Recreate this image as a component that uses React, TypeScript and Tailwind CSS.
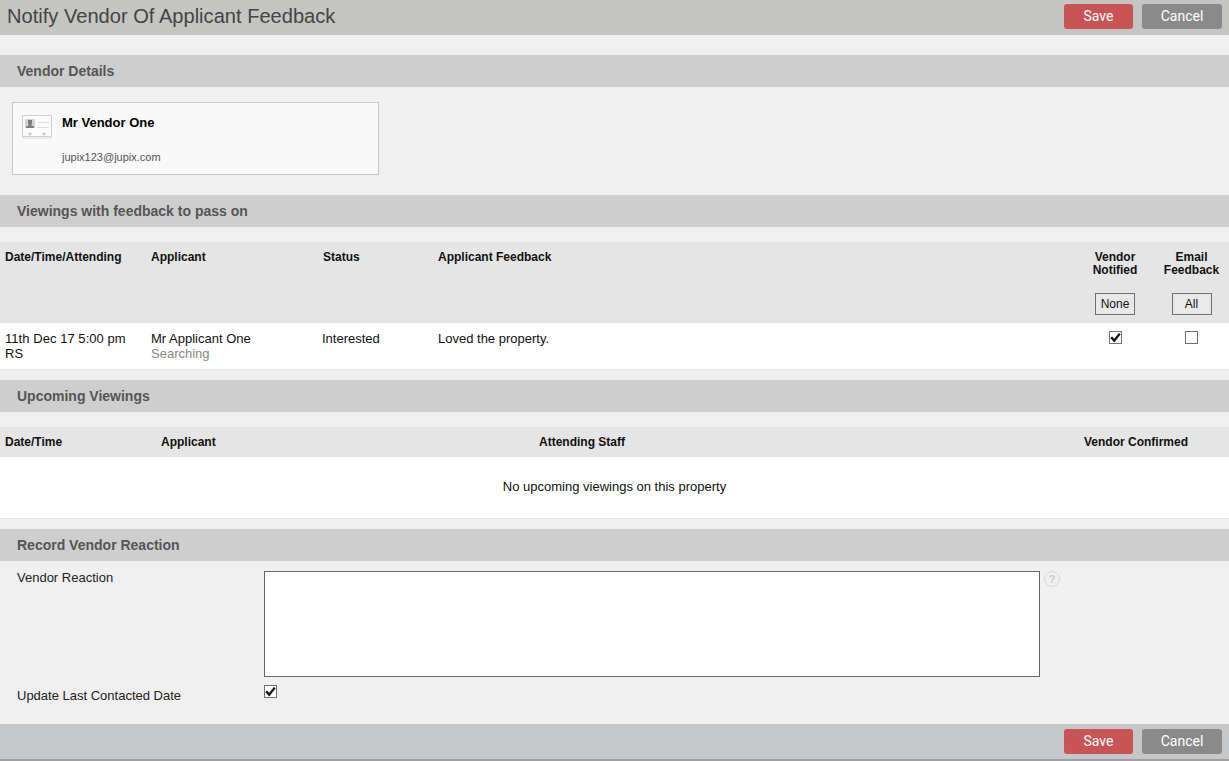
import React from "react";

const Check = () => (
  <span className="flex h-[13px] w-[13px] items-center justify-center border border-[#707070] bg-white">
    <svg width="11" height="11" viewBox="0 0 11 11">
      <path d="M1.2 5.2 L4.2 8.6 L9.8 1.6" fill="none" stroke="#111" strokeWidth="2.3" />
    </svg>
  </span>
);

const Buttons = () => (
  <div className="flex gap-[9px]">
    <button className="h-[25px] w-[69px] rounded-[3px] bg-[#c95455] font-['Roboto',sans-serif] text-[14px] text-white">Save</button>
    <button className="h-[25px] w-[80px] rounded-[3px] bg-[#8a8a8a] font-['Roboto',sans-serif] text-[14px] text-white">Cancel</button>
  </div>
);

const Section = ({ children }: { children: React.ReactNode }) => (
  <div className="flex h-[32px] items-center bg-[#cecece] pl-[17px] text-[14px] font-bold text-[#555]">{children}</div>
);

const CardIcon = () => (
  <svg width="30" height="24" viewBox="0 0 30 24" className="shrink-0">
    <rect x="0.5" y="0.5" width="29" height="21" fill="#fbfbfb" stroke="#cfcfcf" />
    <rect x="3" y="4" width="10" height="9" fill="#d4d4d4" />
    <path d="M4 13 V11.5 L6.5 10.5 V9 H6 V5 H10 V9 H9.5 V10.5 L12 11.5 V13 Z" fill="#7d7d7d" />
    <path d="M16 7.5 H27 M16 12.5 H27" stroke="#dcdcdc" />
    <path d="M6 18 H10 L8 21 Z M20 18 H24 L22 21 Z" fill="#c4c4c4" />
    <rect x="0" y="22" width="30" height="2" fill="#eaeaea" />
  </svg>
);

export default function App() {
  return (
    <div className="h-[761px] w-[1229px] overflow-hidden bg-[#f0f0f0] font-['Liberation_Sans',Arial,sans-serif] text-[13px] text-[#111]">
      <header className="flex h-[35px] items-start justify-between bg-[#c5c5c3] pl-[7px] pr-[7px]">
        <h1 className="mt-[3px] text-[20.1px] leading-[26px] text-[#444]">Notify Vendor Of Applicant Feedback</h1>
        <div className="mt-[3.5px]"><Buttons /></div>
      </header>

      <div className="mt-[20px]"><Section>Vendor Details</Section></div>
      <div className="flex h-[108px] items-start pl-[12px] pt-[15px]">
        <div className="flex h-[73px] w-[367px] gap-[10px] border border-[#c8c8c8] bg-[#f9f9f9] pl-[9px] pt-[12px]">
          <CardIcon />
          <div>
            <div className="text-[13px] font-bold leading-[15px] text-black">Mr Vendor One</div>
            <div className="mt-[21px] text-[11px] leading-[12px] text-[#555]">jupix123@jupix.com</div>
          </div>
        </div>
      </div>

      <Section>Viewings with feedback to pass on</Section>
      <div className="mt-[15px] flex h-[81px] bg-[#e5e5e5] pt-[8px] text-[12px] font-bold leading-[13px]">
        <div className="w-[151px] pl-[5px] pt-[1px]">Date/Time/Attending</div>
        <div className="w-[172px] pt-[1px]">Applicant</div>
        <div className="w-[115px] pt-[1px]">Status</div>
        <div className="w-[638px] pt-[1px]">Applicant Feedback</div>
        <div className="flex w-[78px] flex-col items-center pt-[1px] text-center">
          <div>Vendor<br />Notified</div>
          <button className="mt-[16px] h-[22px] w-[40px] border border-[#707070] bg-[#e9e9e9] text-[12px] font-normal">None</button>
        </div>
        <div className="flex w-[75px] flex-col items-center pt-[1px] text-center">
          <div>Email<br />Feedback</div>
          <button className="mt-[16px] h-[22px] w-[40px] border border-[#707070] bg-[#e9e9e9] text-[12px] font-normal">All</button>
        </div>
      </div>
      <div className="flex h-[47px] border-b border-[#e8e8e8] bg-white pt-[8px] leading-[15px]">
        <div className="w-[151px] pl-[5px] tracking-[0.05px]">11th Dec 17 5:00 pm<br />RS</div>
        <div className="w-[171px]">Mr Applicant One<br /><span className="text-[#888]">Searching</span></div>
        <div className="w-[116px]">Interested</div>
        <div className="w-[638px]">Loved the property.</div>
        <div className="flex w-[78px] justify-center"><Check /></div>
        <div className="flex w-[75px] justify-center">
          <span className="h-[13px] w-[13px] border border-[#707070] bg-white" />
        </div>
      </div>

      <div className="mt-[10px]"><Section>Upcoming Viewings</Section></div>
      <div className="mt-[15px] flex h-[30px] items-center bg-[#e5e5e5] text-[12px] font-bold">
        <div className="w-[161px] pl-[5px]">Date/Time</div>
        <div className="w-[378px]">Applicant</div>
        <div className="w-[545px]">Attending Staff</div>
        <div>Vendor Confirmed</div>
      </div>
      <div className="flex h-[62px] items-center justify-center border-b border-[#e8e8e8] bg-white pb-[2px]">No upcoming viewings on this property</div>

      <div className="mt-[10px]"><Section>Record Vendor Reaction</Section></div>
      <div className="h-[163px] pl-[17px]">
        <div className="flex pt-[10px]">
          <div className="w-[247px] leading-[14px] text-[#222]">Vendor Reaction</div>
          <div className="h-[106px] w-[776px] border border-[#666] bg-white" />
          <div className="ml-[4px] flex h-[16px] w-[16px] items-center justify-center rounded-full border border-[#d4d7df] text-[11px] font-bold leading-none text-[#c8ccd6]">?</div>
        </div>
        <div className="flex pt-[8px]">
          <div className="w-[247px] pt-[4px] leading-[14px] text-[#222]">Update Last Contacted Date</div>
          <Check />
        </div>
      </div>

      <footer className="flex h-[37px] items-start justify-end border-b-2 border-[#9f9f9f] bg-[#c6c7c9] pr-[7px] pt-[5px]">
        <Buttons />
      </footer>
    </div>
  );
}
